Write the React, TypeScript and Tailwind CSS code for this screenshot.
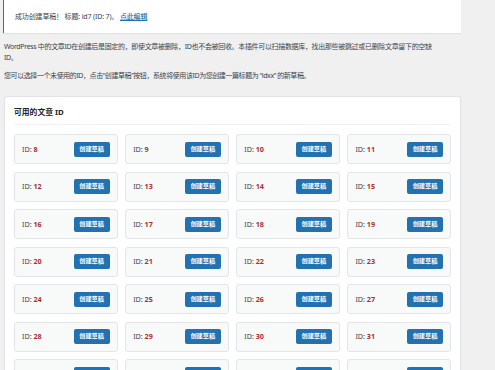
import React from "react";

const ids = Array.from({ length: 28 }, (_, i) => i + 8);

export default function App() {
  return (
    <div
      className="w-[495px] h-[370px] overflow-hidden bg-[#f0f0f1] text-[#3c434a] text-[7px] leading-[11px]"
      style={{ fontFamily: '"Noto Sans", "Noto Sans CJK SC", sans-serif' }}
    >
      <div className="w-[461px] pl-[3px]">
        <div className="-mt-[1px] h-[34px] flex items-center bg-white border-l-[1.5px] border-[#00a32a] shadow-[0_1px_1px_rgba(0,0,0,0.06)] pl-[11px]">
          <span className="tracking-[-0.15px]">
            成功创建草稿！ 标题: id7 (ID: 7)。{" "}
            <a className="text-[#2271b1] underline font-medium">点此编辑</a>
          </span>
        </div>
      </div>
      <div className="pl-[4px] pr-[34px]">
        <p className="mt-[8px] whitespace-nowrap tracking-[-0.33px]">
          WordPress 中的文章ID在创建后是固定的，即使文章被删除，ID也不会被回收。本插件可以扫描数据库，找出那些被跳过或已删除文章留下的空缺
          <br />
          ID。
        </p>
        <p className="mt-[7px] whitespace-nowrap tracking-[-0.42px]">
          您可以选择一个未使用的ID，点击“创建草稿”按钮，系统将使用该ID为您创建一篇标题为 “idxx” 的新草稿。
        </p>
        <div className="mt-[15px] bg-white border border-[#e2e4e7] rounded-[3px] shadow-[0_1px_2px_rgba(0,0,0,0.05)] px-[9px] pt-[9px] pb-[9px]">
          <h2 className="text-[7.8px] font-bold text-[#1d2327] pb-[6px] border-b border-[#f0f0f1] leading-[12px]">
            可用的文章 ID
          </h2>
          <div className="mt-[9px] grid grid-cols-4 gap-x-[7.5px] gap-y-[7.5px]">
            {ids.map((id) => (
              <div
                key={id}
                className="h-[30px] flex items-center justify-between bg-[#f8f9f9] border border-[#e3e5e7] rounded-[3px] pl-[7px] pr-[7px]"
              >
                <span className="text-[#3c434a] text-[7.2px]">
                  ID: <b className="text-[#b32d2e] font-bold">{id}</b>
                </span>
                <button className="h-[15px] w-[36px] flex items-center justify-center rounded-[2px] bg-[#2271b1] text-white text-[6.2px] font-bold leading-none">
                  创建草稿
                </button>
              </div>
            ))}
          </div>
        </div>
      </div>
    </div>
  );
}
